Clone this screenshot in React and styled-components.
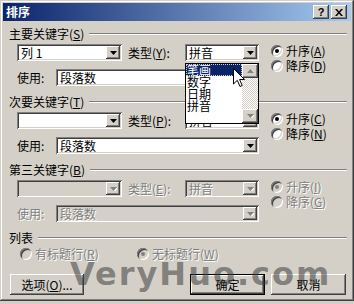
import React from "react";
import styled, { createGlobalStyle, css } from "styled-components";

const GlobalStyle = createGlobalStyle`
  html, body {
    margin: 0;
    padding: 0;
    background: #d4d0c8;
  }
  body {
    font-family: "Noto Sans CJK SC", "Noto Sans", sans-serif;
    font-size: 12px;
    color: #000;
  }
  * { box-sizing: border-box; }
`;

const raised = css`
  box-shadow: inset -1px -1px #404040, inset 1px 1px #fff,
    inset -2px -2px #808080, inset 2px 2px #d4d0c8;
`;

const sunken = css`
  box-shadow: inset 1px 1px #808080, inset -1px -1px #fff,
    inset 2px 2px #404040, inset -2px -2px #d4d0c8;
`;

const dim = css`
  color: #808080;
  text-shadow: 1px 1px #fff;
`;

const Window = styled.div`
  position: relative;
  width: 354px;
  height: 301px;
  padding: 3px;
  background: #d4d0c8;
  box-shadow: inset -1px -1px #404040, inset 1px 1px #d4d0c8,
    inset -2px -2px #808080, inset 2px 2px #fff;
  overflow: hidden;
`;

const TitleBar = styled.div`
  height: 18px;
  display: flex;
  align-items: center;
  padding: 0 4px 0 3px;
  background: linear-gradient(to right, #0a246a, #a6caf0);
`;

const TitleText = styled.div`
  flex: 1;
  color: #fff;
  font-weight: bold;
  font-size: 12px;
  line-height: 18px;
`;

const TitleButton = styled.div`
  width: 16px;
  height: 14px;
  margin-left: ${(p) => (p.$gap ? "2px" : "0")};
  background: #d4d0c8;
  ${raised};
  display: flex;
  align-items: center;
  justify-content: center;
  font-family: "Liberation Sans", Arial, sans-serif;
  font-weight: bold;
  font-size: 11px;
  line-height: 14px;
`;

const Content = styled.div`
  padding: 6px 4px 0 6px;
`;

const Group = styled.div`
  height: 68px;
  display: flex;
  flex-direction: column;
`;

const Header = styled.div`
  height: 14px;
  display: flex;
  align-items: center;
  line-height: 14px;
`;

const HeaderLine = styled.div`
  flex: 1;
  height: 2px;
  margin-left: 5px;
  border-top: 1px solid #808080;
  border-bottom: 1px solid #fff;
`;

const Text = styled.span`
  white-space: nowrap;
  line-height: 14px;
  ${(p) => p.$disabled && dim};
`;

const Body = styled.div`
  display: flex;
  padding-left: 8px;
  margin-top: 3px;
`;

const Fields = styled.div`
  width: 242px;
  display: flex;
  flex-direction: column;
  gap: 8px;
`;

const FieldRow = styled.div`
  height: 17px;
  display: flex;
  align-items: center;
  justify-content: space-between;
`;

const TypeLabel = styled(Text)`
  flex: 1;
  margin-left: 6px;
`;

const Combo = styled.div`
  width: ${(p) => p.$w}px;
  height: 17px;
  padding: 2px;
  display: flex;
  align-items: center;
  background: ${(p) => (p.$disabled ? "#d4d0c8" : "#fff")};
  ${sunken};
`;

const ComboText = styled.div`
  flex: 1;
  padding-left: 2px;
  line-height: 13px;
  white-space: nowrap;
  ${(p) => p.$disabled && dim};
`;

const DropButton = styled.div`
  width: 14px;
  height: 13px;
  background: #d4d0c8;
  ${raised};
  display: flex;
  align-items: center;
  justify-content: center;
`;

const Radios = styled.div`
  margin-left: 12px;
  margin-top: -1px;
  display: flex;
  flex-direction: column;
`;

const RadioRow = styled.div`
  height: 15px;
  width: ${(p) => (p.$w ? `${p.$w}px` : "auto")};
  display: flex;
  align-items: center;
  gap: 3px;
`;

const RadioCircle = styled.div`
  position: relative;
  width: 12px;
  height: 12px;
  border-radius: 50%;
  background: ${(p) => (p.$disabled ? "#d4d0c8" : "#fff")};
  box-shadow: inset 1px 1px #808080, inset -1px -1px #fff,
    inset 2px 2px #404040, inset -2px -2px #d4d0c8;

  &::after {
    content: "";
    display: ${(p) => (p.$checked ? "block" : "none")};
    position: absolute;
    left: 4px;
    top: 4px;
    width: 4px;
    height: 4px;
    border-radius: 50%;
    background: ${(p) => (p.$disabled ? "#808080" : "#000")};
  }
`;

const ListBody = styled.div`
  display: flex;
  padding-left: 11px;
  margin-top: 1px;
`;

const ButtonRow = styled.div`
  display: flex;
  gap: 6px;
  padding: 0 1px;
  margin-top: 13px;
`;

const Button = styled.div`
  width: ${(p) => p.$w || 75}px;
  height: 21px;
  margin-left: ${(p) => (p.$push ? "auto" : "0")};
  background: #d4d0c8;
  display: flex;
  align-items: center;
  justify-content: center;
  line-height: 14px;
  ${(p) =>
    p.$default
      ? css`
          border: 1px solid #000;
          box-shadow: inset -1px -1px #404040, inset 1px 1px #fff,
            inset -2px -2px #808080;
        `
      : raised};
`;

const DropList = styled.div`
  position: absolute;
  left: 185px;
  top: 63px;
  width: 74px;
  height: 61px;
  border: 1px solid #000;
  background: #fff;
  display: flex;
`;

const Items = styled.div`
  flex: 1;
`;

const Item = styled.div`
  height: 12px;
  line-height: 12px;
  padding-left: 1px;
  white-space: nowrap;
  ${(p) =>
    p.$selected &&
    css`
      background: #0a246a;
      color: #fff;
      outline: 1px dotted #d4d0c8;
      outline-offset: -1px;
    `};
`;

const ScrollBar = styled.div`
  width: 16px;
  display: flex;
  flex-direction: column;
`;

const ScrollButton = styled(DropButton)`
  width: 16px;
  height: 14px;
`;

const Track = styled.div`
  flex: 1;
  background: repeating-conic-gradient(#fff 0 25%, #d4d0c8 0 50%) 0 0 / 2px 2px;
`;

const Cursor = styled.svg`
  position: absolute;
  left: 233px;
  top: 68px;
`;

const Watermark = styled.div`
  position: absolute;
  left: 70px;
  top: 258px;
  font-family: "DejaVu Sans", sans-serif;
  font-weight: bold;
  font-size: 32px;
  line-height: 1;
  letter-spacing: 2px;
  color: rgba(60, 60, 60, 0.55);
  pointer-events: none;
  white-space: nowrap;
`;

const Arrow = ({ up, disabled }) => (
  <svg width="7" height="4" viewBox="0 0 7 4">
    {disabled && (
      <polygon
        points={up ? "1,4 4.5,0.5 8,4" : "1,1 8,1 4.5,4.5"}
        fill="#fff"
      />
    )}
    <polygon
      points={up ? "0,4 3.5,0 7,4" : "0,0 7,0 3.5,4"}
      fill={disabled ? "#808080" : "#000"}
    />
  </svg>
);

const ComboBox = ({ w, value, disabled }) => (
  <Combo $w={w} $disabled={disabled}>
    <ComboText $disabled={disabled}>{value}</ComboText>
    <DropButton>
      <Arrow disabled={disabled} />
    </DropButton>
  </Combo>
);

const Radio = ({ label, checked, disabled, w }) => (
  <RadioRow $w={w}>
    <RadioCircle $checked={checked} $disabled={disabled} />
    <Text $disabled={disabled}>{label}</Text>
  </RadioRow>
);

const keys = [
  { title: "主要关键字", k: "S", field: "列 1", type: "Y", up: "A", down: "D" },
  { title: "次要关键字", k: "T", field: "", type: "P", up: "C", down: "N" },
  { title: "第三关键字", k: "B", field: "", type: "E", up: "I", down: "G", disabled: true },
];

const Mn = ({ c }) => (
  <>
    (<u>{c}</u>)
  </>
);

export default function App() {
  return (
    <>
      <GlobalStyle />
      <Window>
        <TitleBar>
          <TitleText>排序</TitleText>
          <TitleButton>?</TitleButton>
          <TitleButton $gap>
            <svg width="8" height="7" viewBox="0 0 8 7">
              <path d="M0 0h2l2 2.5L6 0h2L5 3.5 8 7H6L4 4.5 2 7H0l3-3.5z" fill="#000" />
            </svg>
          </TitleButton>
        </TitleBar>

        <Content>
          {keys.map((g) => (
            <Group key={g.k}>
              <Header>
                <Text>
                  {g.title}
                  <Mn c={g.k} />
                </Text>
                <HeaderLine />
              </Header>
              <Body>
                <Fields>
                  <FieldRow>
                    <ComboBox w={105} value={g.field} disabled={g.disabled} />
                    <TypeLabel $disabled={g.disabled}>
                      类型<Mn c={g.type} />:
                    </TypeLabel>
                    <ComboBox w={74} value="拼音" disabled={g.disabled} />
                  </FieldRow>
                  <FieldRow>
                    <Text $disabled={g.disabled}>使用:</Text>
                    <ComboBox w={203} value="段落数" disabled={g.disabled} />
                  </FieldRow>
                </Fields>
                <Radios>
                  <Radio
                    checked
                    disabled={g.disabled}
                    label={<>升序<Mn c={g.up} /></>}
                  />
                  <Radio
                    disabled={g.disabled}
                    label={<>降序<Mn c={g.down} /></>}
                  />
                </Radios>
              </Body>
            </Group>
          ))}

          <Header>
            <Text>列表</Text>
            <HeaderLine />
          </Header>
          <ListBody>
            <Radio w={117} disabled label={<>有标题行<Mn c="R" /></>} />
            <Radio checked disabled label={<>无标题行<Mn c="W" /></>} />
          </ListBody>

          <ButtonRow>
            <Button $w={74}>
              选项<Mn c="O" />...
            </Button>
            <Button $push $default>确定</Button>
            <Button>取消</Button>
          </ButtonRow>
        </Content>

        <DropList>
          <Items>
            <Item $selected>笔画</Item>
            <Item>数字</Item>
            <Item>日期</Item>
            <Item>拼音</Item>
          </Items>
          <ScrollBar>
            <ScrollButton>
              <Arrow up disabled />
            </ScrollButton>
            <Track />
            <ScrollButton>
              <Arrow disabled />
            </ScrollButton>
          </ScrollBar>
        </DropList>

        <Cursor width="12" height="20" viewBox="0 0 12 20">
          <path
            d="M0.5 0.5 L0.5 16 L4.3 12.3 L7 18.5 L9.2 17.5 L6.6 11.5 L11.5 11.5 Z"
            fill="#fff"
            stroke="#000"
            strokeWidth="1"
          />
        </Cursor>

        <Watermark>VeryHuo.com</Watermark>
      </Window>
    </>
  );
}
